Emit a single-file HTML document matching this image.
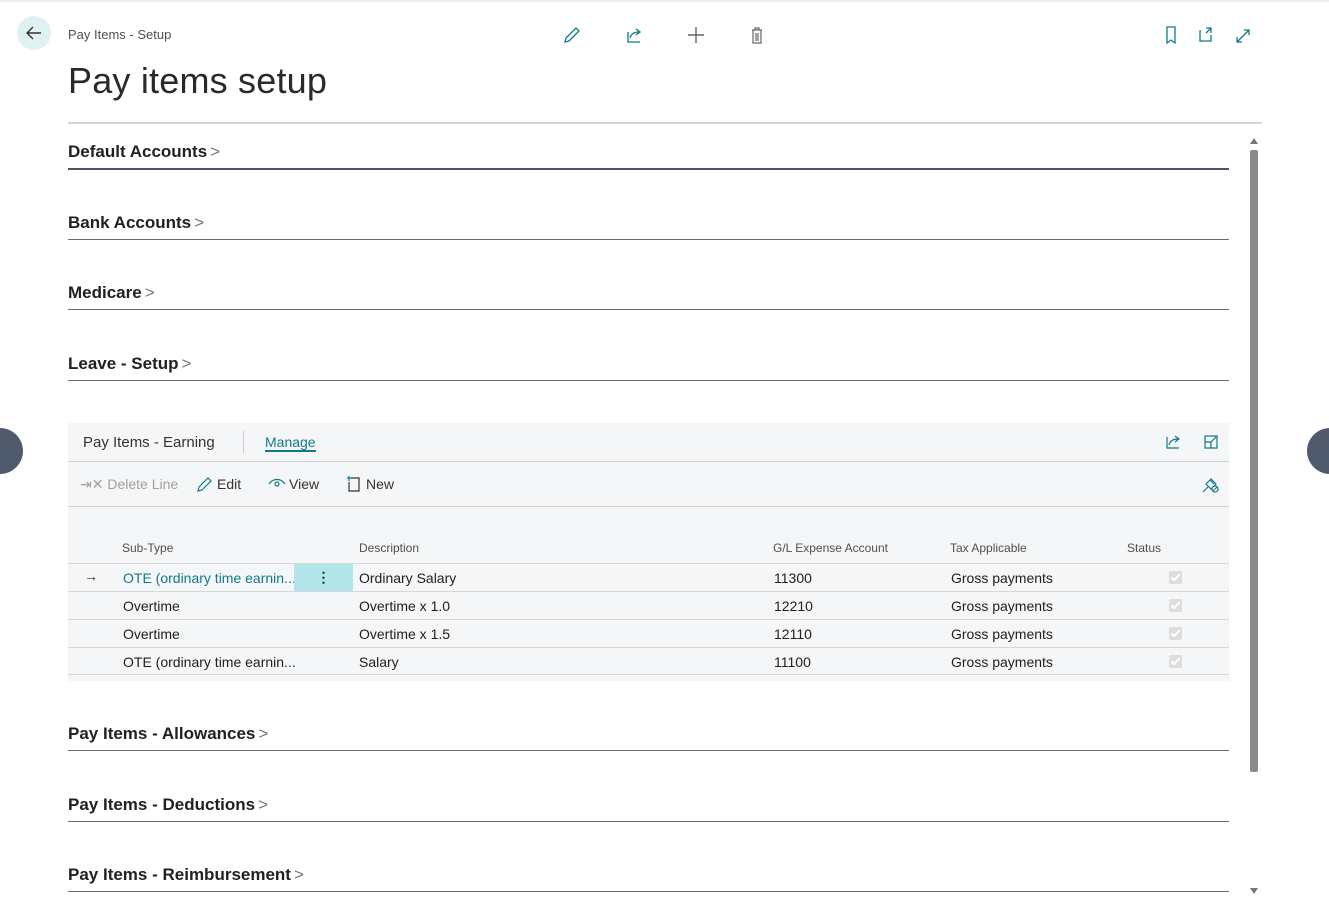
<!DOCTYPE html>
<html><head><meta charset="utf-8"><style>
*{margin:0;padding:0;box-sizing:border-box}
body{width:1329px;height:898px;overflow:hidden;background:#fff;font-family:"Segoe UI","Liberation Sans",sans-serif;color:#212121;position:relative}
.a{position:absolute}
.topline{left:0;top:0;width:1329px;height:2px;background:#eee}
.sec{position:absolute;left:68px;width:1161px;font-size:17px;font-weight:bold;color:#212121;border-bottom:1px solid #6b6b6b;height:0}
.sec > span{position:absolute;left:0;top:-26px;white-space:nowrap}
.chev{font-weight:normal;color:#777;margin-left:3px}
.panel{left:68px;top:423px;width:1161px;height:258px;background:#f5f6f8}
.th{position:absolute;font-size:12px;color:#505050;top:541px}
.row{position:absolute;left:68px;width:1161px;height:28px;border-top:1px solid #d8d8d8;font-size:14px}
.row div{position:absolute;top:6px;white-space:nowrap}
.cb{position:absolute;left:1101px;top:7px;width:13px;height:13px;background:#ddd;border-radius:2px}
.cb:after{content:"";position:absolute;left:4px;top:1px;width:3px;height:7px;border:solid #fff;border-width:0 2px 2px 0;transform:rotate(45deg)}
</style></head><body>
<div class="a topline"></div>
<div class="a" style="left:17px;top:16px;width:34px;height:34px;border-radius:50%;background:#dff1f3"></div>
<svg class="a" style="left:24px;top:23px" width="20" height="20" viewBox="0 0 20 20"><path d="M17 10H4M9 4L3 10l6 6" fill="none" stroke="#333" stroke-width="1.4"/></svg>
<div class="a" style="left:68px;top:27px;font-size:13px;color:#505050">Pay Items - Setup</div>
<div class="a" style="left:68px;top:60px;font-size:36px;font-weight:300;color:#2a2a2a;font-family:'Liberation Sans',sans-serif;letter-spacing:0.2px">Pay items setup</div>
<svg class="a" style="left:560px;top:24px" width="210" height="22" viewBox="0 0 210 22">
<path d="M5 18l1-4 10-10 3 3-10 10z" fill="none" stroke="#0f7b86" stroke-width="1.3"/>
<path d="M68 8v10h12M70 14c1-4 4-6 9-6M76 5l4 3-4 3" fill="none" stroke="#0f7b86" stroke-width="1.3"/>
<path d="M136 3v16M128 11h16" stroke="#666" stroke-width="1.4"/>
<path d="M192 6h10M195 6V4h4v2M193 6v13h8V6M196 9v8M198 9v8" fill="none" stroke="#666" stroke-width="1.2"/>
</svg>
<svg class="a" style="left:1160px;top:24px" width="95" height="22" viewBox="0 0 95 22">
<path d="M7 3h8v16l-4-3-4 3z" fill="none" stroke="#0f7b86" stroke-width="1.3"/>
<path d="M41 7h-1v10h11v-6M46 4h5v5M51 4l-5 5" fill="none" stroke="#0f7b86" stroke-width="1.3"/>
<path d="M77 18l12-12M77 13v5h5M89 11V6h-5" fill="none" stroke="#0f7b86" stroke-width="1.3"/>
</svg>
<div class="a" style="left:68px;top:122px;width:1194px;height:2px;background:#d6d6da"></div>
<div class="sec" style="top:168px;border-bottom:2px solid #4a5566"><span>Default Accounts<span class="chev">&gt;</span></span></div>
<div class="sec" style="top:239px"><span>Bank Accounts<span class="chev">&gt;</span></span></div>
<div class="sec" style="top:309px"><span>Medicare<span class="chev">&gt;</span></span></div>
<div class="sec" style="top:380px"><span>Leave - Setup<span class="chev">&gt;</span></span></div>
<div class="a panel"></div>
<div class="a" style="left:83px;top:434px;font-size:15px;color:#333">Pay Items - Earning</div>
<div class="a" style="left:243px;top:431px;width:1px;height:22px;background:#ccc"></div>
<div class="a" style="left:265px;top:434px;font-size:14px;color:#0f7b86;border-bottom:2px solid #0f7b86;line-height:16px">Manage</div>
<svg class="a" style="left:1163px;top:432px" width="60" height="20" viewBox="0 0 60 20"><path d="M4 5v11h12M6 13c1-4 4-6 9-6M12 4l4 3-4 3" fill="none" stroke="#0f7b86" stroke-width="1.2"/><path d="M42 4h12v12H42zM42 10h6v6M48 10l5-5" fill="none" stroke="#0f7b86" stroke-width="1.2"/></svg>
<div class="a" style="left:68px;top:461px;width:1161px;height:1px;background:#d0d0d0"></div>
<div class="a" style="left:80px;top:476px;font-size:14px;color:#a0a0a0">⇥✕ Delete Line</div>
<svg class="a" style="left:196px;top:475px" width="18" height="18" viewBox="0 0 18 18"><path d="M2 16l1-4 9-9 3 3-9 9z" fill="none" stroke="#0f7b86" stroke-width="1.2"/></svg>
<div class="a" style="left:217px;top:476px;font-size:14px;color:#333">Edit</div>
<svg class="a" style="left:267px;top:476px" width="20" height="14" viewBox="0 0 20 14"><path d="M2 8c4-6 12-6 16 0" fill="none" stroke="#0f7b86" stroke-width="1.2"/><circle cx="10" cy="8" r="2" fill="none" stroke="#0f7b86" stroke-width="1.2"/></svg>
<div class="a" style="left:289px;top:476px;font-size:14px;color:#333">View</div>
<svg class="a" style="left:346px;top:475px" width="16" height="18" viewBox="0 0 16 18"><path d="M5 3h8v13H3V7" fill="none" stroke="#333" stroke-width="1.2"/><path d="M3 1v5M1 3h5" stroke="#0f7b86" stroke-width="1.2"/></svg>
<div class="a" style="left:366px;top:476px;font-size:14px;color:#333">New</div>
<svg class="a" style="left:1201px;top:476px" width="20" height="18" viewBox="0 0 20 18"><path d="M2 16l5-5M5 8l5-5 5 5-5 5zM9 4l4 4" fill="none" stroke="#0f7b86" stroke-width="1.2"/><circle cx="14" cy="13" r="3" fill="#f5f6f8" stroke="#0f7b86" stroke-width="1.2"/><path d="M12 15l4-4" stroke="#0f7b86"/></svg>
<div class="a" style="left:68px;top:506px;width:1161px;height:1px;background:#d0d0d0"></div>
<div class="th" style="left:122px">Sub-Type</div>
<div class="th" style="left:359px">Description</div>
<div class="th" style="left:773px">G/L Expense Account</div>
<div class="th" style="left:950px">Tax Applicable</div>
<div class="th" style="left:1127px">Status</div>
<div class="row" style="top:563px"><div style="left:16px;top:4px;color:#333">→</div><div style="left:55px;color:#0f7b86">OTE (ordinary time earnin...</div><div style="left:226px;top:0;width:59px;height:27px;background:#b2e6ea;text-align:center;line-height:26px;font-weight:bold">⋮</div><div style="left:291px">Ordinary Salary</div><div style="left:706px">11300</div><div style="left:883px">Gross payments</div><span class="cb"></span></div>
<div class="row" style="top:591px"><div style="left:55px">Overtime</div><div style="left:291px">Overtime x 1.0</div><div style="left:706px">12210</div><div style="left:883px">Gross payments</div><span class="cb"></span></div>
<div class="row" style="top:619px"><div style="left:55px">Overtime</div><div style="left:291px">Overtime x 1.5</div><div style="left:706px">12110</div><div style="left:883px">Gross payments</div><span class="cb"></span></div>
<div class="row" style="top:647px;border-bottom:1px solid #d8d8d8"><div style="left:55px">OTE (ordinary time earnin...</div><div style="left:291px">Salary</div><div style="left:706px">11100</div><div style="left:883px">Gross payments</div><span class="cb"></span></div>
<div class="sec" style="top:750px"><span>Pay Items - Allowances<span class="chev">&gt;</span></span></div>
<div class="sec" style="top:821px"><span>Pay Items - Deductions<span class="chev">&gt;</span></span></div>
<div class="sec" style="top:891px"><span>Pay Items - Reimbursement<span class="chev">&gt;</span></span></div>
<div class="a" style="left:1250px;top:150px;width:8px;height:622px;background:#8a8a8a;border-radius:2px"></div>
<div class="a" style="left:1250px;top:138px;width:0;height:0;border:4px solid transparent;border-bottom:6px solid #777;border-top:0"></div>
<div class="a" style="left:1250px;top:888px;width:0;height:0;border:4px solid transparent;border-top:6px solid #777;border-bottom:0"></div>
<div class="a" style="left:-23px;top:428px;width:46px;height:46px;border-radius:50%;background:#4f5b6d"></div>
<div class="a" style="left:1307px;top:428px;width:46px;height:46px;border-radius:50%;background:#4f5b6d"></div>
</body></html>
